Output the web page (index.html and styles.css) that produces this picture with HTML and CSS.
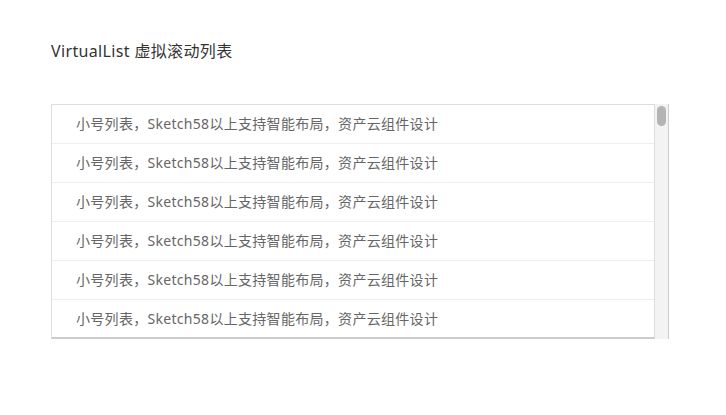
FILE: index.html
```html
<!DOCTYPE html>
<html lang="zh-CN">
<head>
    <meta charset="UTF-8">
    <title>VirtualList 虚拟滚动列表</title>
    <link rel="stylesheet" href="styles.css">
</head>
<body>
    <div class="page">
        <h1 class="title">VirtualList 虚拟滚动列表</h1>
        <div class="vlist">
            <div class="vlist-body">
                <div class="vlist-item">小号列表，Sketch58以上支持智能布局，资产云组件设计</div>
                <div class="vlist-item">小号列表，Sketch58以上支持智能布局，资产云组件设计</div>
                <div class="vlist-item">小号列表，Sketch58以上支持智能布局，资产云组件设计</div>
                <div class="vlist-item">小号列表，Sketch58以上支持智能布局，资产云组件设计</div>
                <div class="vlist-item">小号列表，Sketch58以上支持智能布局，资产云组件设计</div>
                <div class="vlist-item">小号列表，Sketch58以上支持智能布局，资产云组件设计</div>
            </div>
            <div class="vlist-bar">
                <div class="vlist-thumb"></div>
            </div>
        </div>
    </div>
</body>
</html>
```

FILE: styles.css
```css
body {
    margin: 0;
    background: #ffffff;
    font-family: 'Noto Sans', 'Noto Sans CJK SC', sans-serif;
}
.page {
    padding: 40px 0 0 51px;
}
.title {
    margin: 0 0 42px;
    font-size: 16px;
    line-height: 22px;
    font-weight: normal;
    letter-spacing: 0.35px;
    color: #333;
}
.vlist {
    display: flex;
    width: 618px;
    height: 235px;
}
.vlist-body {
    flex: 1;
    overflow: hidden;
    border: 1px solid #dddddd;
    border-bottom: 2px solid #cccccc;
}
.vlist-item {
    height: 38px;
    line-height: 38px;
    padding-left: 24px;
    border-bottom: 1px solid #eeeeee;
    font-size: 14px;
    letter-spacing: 0.3px;
    color: #666;
    white-space: nowrap;
}
.vlist-item:last-child {
    border-bottom: none;
}
.vlist-bar {
    width: 14px;
    background: #f3f3f3;
    border-right: 1px solid #cccccc;
    padding: 2px 0 0 2px;
    box-sizing: border-box;
}
.vlist-thumb {
    width: 9px;
    height: 20px;
    border-radius: 5px;
    background: #b4b4b4;
}
```
